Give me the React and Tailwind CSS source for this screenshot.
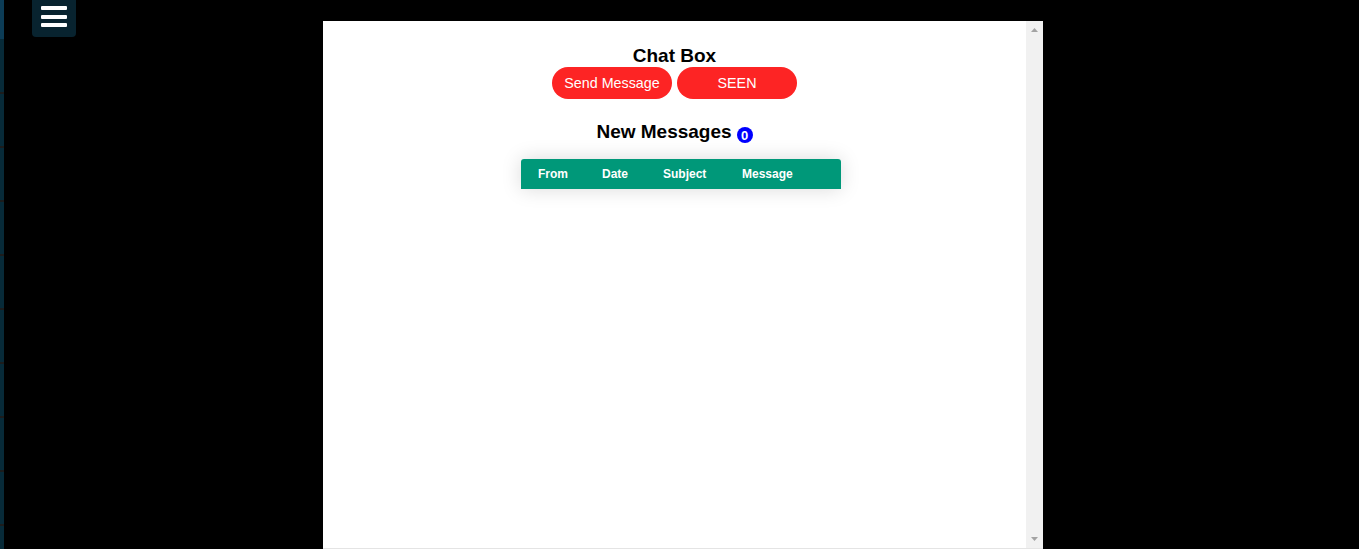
const columns = ["From", "Date", "Subject", "Message"];

export default function App() {
  return (
    <div className="relative flex h-[549px] w-full overflow-hidden bg-black font-['Liberation_Sans',Arial,sans-serif]">
      {/* Sidebar strip (collapsed) */}
      <div className="flex w-[4px] shrink-0 flex-col">
        <div className="h-[39px] shrink-0 bg-[#0c3c56]" />
        <div className="h-[53px] shrink-0 bg-[#072a38]" />
        {[0, 1, 2, 3, 4, 5, 6, 7, 8].map((i) => (
          <div key={i} className="h-[54px] shrink-0 border-t-2 border-[#1c1c1c] bg-[#072a38]" />
        ))}
      </div>

      {/* Menu toggle */}
      <button className="absolute left-[32px] top-0 flex h-[37px] w-[44px] flex-col items-center gap-[4.5px] rounded-b-[4px] bg-[#08232f] pt-[6px]">
        <span className="block h-[4px] w-[26px] rounded-[1px] bg-white" />
        <span className="block h-[4px] w-[26px] rounded-[1px] bg-white" />
        <span className="block h-[4px] w-[26px] rounded-[1px] bg-white" />
      </button>

      {/* Chat frame */}
      <div className="ml-[319px] mt-[21px] flex h-[528px] w-[720px] shrink-0 border-b border-[#e4e4e4] bg-white">
        <div className="flex flex-1 flex-col items-center pt-[24px] text-black">
          <h3 className="text-[19px] font-bold leading-[22px]">Chat Box</h3>
          <div className="flex gap-[5px]">
            <button className="h-[32px] w-[120px] rounded-[16px] bg-[#fd2424] pt-[2px] text-[14.3px] text-white">
              Send Message
            </button>
            <button className="h-[32px] w-[120px] rounded-[16px] bg-[#fd2424] pt-[2px] text-[14.3px] text-white">
              SEEN
            </button>
          </div>

          <div className="mt-[22px] flex items-start gap-[5px]">
            <h3 className="text-[19px] font-bold leading-[22px]">New Messages</h3>
            <span className="mt-[6px] flex h-[16px] w-[16px] items-center justify-center rounded-full bg-[#0000ff] text-[13px] font-bold leading-none text-white">
              0
            </span>
          </div>

          <div className="mt-[16px] ml-[13px] w-[320px] overflow-hidden rounded-t-[3px] shadow-[0_0_20px_rgba(0,0,0,0.15)]">
            <div className="flex h-[30px] items-center bg-[#009879] text-[12px] font-bold text-white">
              <div className="w-[64px] pl-[17px]">{columns[0]}</div>
              <div className="w-[60px] pl-[17px]">{columns[1]}</div>
              <div className="w-[79px] pl-[18px]">{columns[2]}</div>
              <div className="flex-1 pl-[18px]">{columns[3]}</div>
            </div>
          </div>
        </div>

        {/* Scrollbar */}
        <div className="flex w-[17px] shrink-0 flex-col items-center justify-between bg-[#f1f1f1] py-[7px]">
          <svg width="7" height="4" viewBox="0 0 7 4">
            <polygon points="3.5,0 7,4 0,4" fill="#a3a3a3" />
          </svg>
          <svg width="7" height="4" viewBox="0 0 7 4">
            <polygon points="0,0 7,0 3.5,4" fill="#a3a3a3" />
          </svg>
        </div>
      </div>
    </div>
  );
}
